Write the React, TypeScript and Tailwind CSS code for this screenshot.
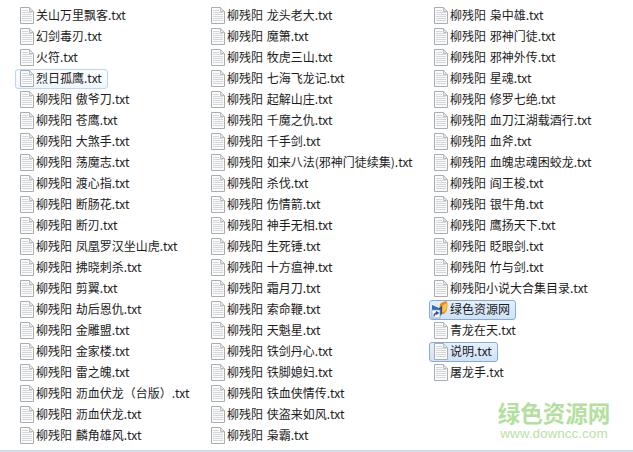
import React from 'react'

type FileRow = { name: string; selected?: 'soft' | 'strong'; shortcut?: boolean }

const p = '柳残阳 '

const col1: FileRow[] = [
  { name: '关山万里飘客.txt' },
  { name: '幻剑毒刃.txt' },
  { name: '火符.txt' },
  { name: '烈日孤鹰.txt', selected: 'soft' },
  { name: p + '傲爷刀.txt' },
  { name: p + '苍鹰.txt' },
  { name: p + '大煞手.txt' },
  { name: p + '荡魔志.txt' },
  { name: p + '渡心指.txt' },
  { name: p + '断肠花.txt' },
  { name: p + '断刃.txt' },
  { name: p + '凤凰罗汉坐山虎.txt' },
  { name: p + '拂晓刺杀.txt' },
  { name: p + '剪翼.txt' },
  { name: p + '劫后恩仇.txt' },
  { name: p + '金雕盟.txt' },
  { name: p + '金家楼.txt' },
  { name: p + '雷之魄.txt' },
  { name: p + '沥血伏龙（台版）.txt' },
  { name: p + '沥血伏龙.txt' },
  { name: p + '麟角雄风.txt' },
]

const col2: FileRow[] = [
  '龙头老大', '魔箫', '牧虎三山', '七海飞龙记', '起解山庄', '千魔之仇', '千手剑',
  '如来八法(邪神门徒续集)', '杀伐', '伤情箭', '神手无相', '生死锤', '十方瘟神', '霜月刀',
  '索命鞭', '天魁星', '铁剑丹心', '铁脚媳妇', '铁血侠情传', '侠盗来如风', '枭霸',
].map((n) => ({ name: p + n + '.txt' }))

const col3: FileRow[] = [
  ...['枭中雄', '邪神门徒', '邪神外传', '星魂', '修罗七绝', '血刀江湖载酒行', '血斧', '血魄忠魂困蛟龙', '阎王梭', '银牛角', '鹰扬天下', '眨眼剑', '竹与剑'].map((n) => ({
    name: p + n + '.txt',
  })),
  { name: '柳残阳小说大合集目录.txt' },
  { name: '绿色资源网', selected: 'strong', shortcut: true },
  { name: '青龙在天.txt' },
  { name: '说明.txt', selected: 'strong' },
  { name: '屠龙手.txt' },
]

function TxtIcon() {
  return (
    <svg width="14" height="17" viewBox="0 0 14 17" className="shrink-0">
      <path d="M0.5 0.5H9.5L13.5 4.5V16.5H0.5Z" fill="#fbfbfb" stroke="#a9adb2" />
      <path d="M9.5 0.5V4.5H13.5Z" fill="#e6e8ea" stroke="#b9bcc0" />
      <path d="M2 3.5H8M2 5.5H12M2 7.5H12M2 9.5H12M2 11.5H12M2 13.5H12" stroke="#d3d7dc" />
    </svg>
  )
}

function ShortcutIcon() {
  return (
    <svg width="18" height="18" viewBox="0 0 18 18" className="shrink-0 ml-[-3px] mr-[-1px]">
      <path d="M9 3C11 1 14 0 16 0.5C17 5 16.5 10 13 13H8Z" fill="#f08a1c" />
      <path d="M12 4C13.5 3 15 2.5 16 2.5C16.5 6 15.5 9 13 11H11Z" fill="#fbc64a" />
      <path d="M1 4L8 7V16H1Z" fill="#2f6fb5" />
      <path d="M8 7L11 5V13L8 16Z" fill="#1f4f8f" />
      <rect x="1" y="9" width="8" height="8" fill="#ffffff" stroke="#8aa0b8" strokeWidth="0.8" />
      <path d="M3 15.5C3 13 4 12 6.5 12M5 10.5L7.2 12L5 13.5" fill="none" stroke="#1d55a8" strokeWidth="1.3" />
    </svg>
  )
}

function Row({ file }: { file: FileRow }) {
  const box =
    file.selected === 'strong'
      ? 'border-[#84acdd] bg-gradient-to-b from-[#e6f0fc] to-[#cfe2f9]'
      : file.selected === 'soft'
        ? 'border-[#b9d7fb] bg-gradient-to-b from-[#fbfdff] to-[#f1f6fd]'
        : 'border-transparent'

  return (
    <div className="h-[21px] flex items-center">
      <div className={`h-[20px] inline-flex items-center rounded-[3px] border pl-[4px] pr-[5px] gap-[2px] whitespace-nowrap ${box}`}>
        {file.shortcut ? <ShortcutIcon /> : <TxtIcon />}
        <span className="mt-[-2px] text-[12px] leading-none [word-spacing:1px] text-[#1c1c1c]">{file.name}</span>
      </div>
    </div>
  )
}

function Column({ files, className }: { files: FileRow[]; className: string }) {
  return (
    <div className={`flex flex-col ${className}`}>
      {files.map((f) => (
        <Row key={f.name} file={f} />
      ))}
    </div>
  )
}

export default function App(): React.ReactElement {
  return (
    <div className="relative w-[633px] h-[452px] overflow-hidden bg-white font-['Noto_Sans_CJK_SC','Noto_Sans_CJK_TC',sans-serif]">
      <div className="flex h-[450px] pt-[5px] pl-[15px]">
        <Column files={col1} className="w-[191px]" />
        <Column files={col2} className="w-[223px]" />
        <Column files={col3} className="flex-1" />
      </div>
      <div className="h-[2px] bg-[#cfdcea]" />

      {/* watermark */}
      <div className="absolute left-[495px] top-[399px] w-[118px] flex flex-col items-center">
        <div className="text-[22.5px] leading-[27px] font-bold text-[#b4e09f] whitespace-nowrap">绿色资源网</div>
        <div className="font-['Liberation_Sans',sans-serif] text-[13.5px] leading-[16px] text-[#b9e2a6] whitespace-nowrap">www.downcc.com</div>
      </div>
    </div>
  )
}
